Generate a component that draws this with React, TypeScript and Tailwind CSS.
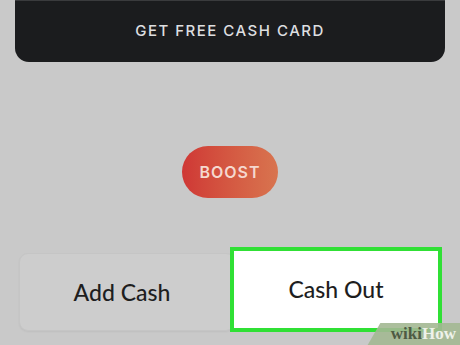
export default function App() {
  return (
    <div className="relative w-[460px] h-[345px] overflow-hidden bg-[#c9c9c9] font-['Lato','Noto_Sans',sans-serif]">
      {/* Cash card banner */}
      <div className="mx-[15px] h-[62px] rounded-b-[14px] bg-[#1b1c1e] border-t border-[#3a3b3d] flex items-center justify-center">
        <span className="text-[15px] font-medium tracking-[0.1em] text-[#dedfe0] font-['Inter','Lato',sans-serif]">
          GET FREE CASH CARD
        </span>
      </div>

      {/* Boost */}
      <div className="mt-[84px] flex justify-center">
        <div className="w-[96px] h-[52px] rounded-full bg-gradient-to-r from-[#cf3735] to-[#d8744f] flex items-center justify-center">
          <span className="text-[16px] font-semibold tracking-[0.06em] text-[#f5d8cf] font-['Inter','Lato',sans-serif]">
            BOOST
          </span>
        </div>
      </div>

      {/* Actions */}
      <div className="mt-[49px] flex items-start pl-[19px]">
        <div className="mt-[6px] w-[216px] h-[78px] rounded-[9px] bg-[#cdcdcd] border border-[#c5c5c5] shadow-[0_1px_2px_rgba(0,0,0,0.05)] flex items-center justify-center">
          <span className="text-[23px] font-medium text-[#1e1e1e] pr-[10px]">Add Cash</span>
        </div>
        <div className="-ml-[5px] w-[212px] h-[85px] bg-white border-[4px] border-[#30e035] flex items-center justify-center">
          <span className="text-[23px] font-medium text-[#1e1e1e]">Cash Out</span>
        </div>
      </div>

      {/* wikiHow watermark */}
      <div className="absolute right-[-14px] bottom-0 h-[22px] w-[100px] -skew-x-[30deg] bg-[#a3b892]/90" />
      <div className="absolute right-[4px] bottom-[3px] text-[17px] font-bold font-['Liberation_Serif',serif] leading-none">
        <span className="text-[#4d5b43]">wiki</span>
        <span className="text-[#eef2ea]">How</span>
      </div>
    </div>
  );
}
